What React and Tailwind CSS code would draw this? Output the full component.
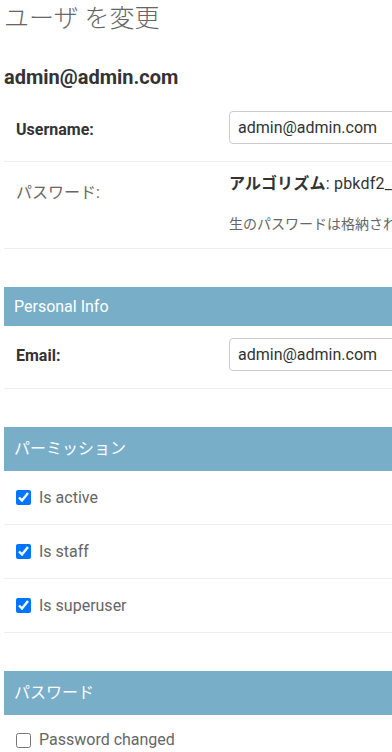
const font = { fontFamily: "Roboto, 'Noto Sans CJK JP', sans-serif" };

function SectionHeader({ children, tall }) {
  return (
    <h2
      className={`bg-[#79aec8] text-white text-[16px] font-normal pl-[10px] flex items-center ${
        tall ? "h-[44px]" : "h-[39px]"
      }`}
    >
      {children}
    </h2>
  );
}

function TextRow({ label, value, height, top, labelTop }) {
  return (
    <div className={`flex border-b border-[#eee] ${height} ${top}`}>
      <label className={`w-[225px] shrink-0 pl-[12px] ${labelTop} text-[16px] leading-[20px] font-bold text-[#333]`}>
        {label}
      </label>
      <input
        readOnly
        value={value}
        className="w-[360px] h-[33px] border border-[#ccc] rounded-[4px] px-[8px] text-[16px] text-[#333] outline-none"
        style={font}
      />
    </div>
  );
}

function CheckRow({ label, checked, last }) {
  return (
    <div className={`flex items-center gap-[8px] pl-[12px] ${last ? "h-[50px]" : "h-[54px] border-b border-[#eee]"}`}>
      <input
        type="checkbox"
        readOnly
        checked={checked}
        className="w-[15px] h-[15px] m-0 accent-[#0075ff]"
      />
      <span className="text-[16px] text-[#666]">{label}</span>
    </div>
  );
}

export default function App() {
  return (
    <div className="w-[392px] h-[752px] overflow-hidden bg-white" style={font}>
      <div className="w-[900px] pl-[4px]">
        <h1 className="text-[25px] font-light text-[#666] leading-[38px]">ユーザ を変更</h1>
        <h2 className="text-[20px] font-bold text-[#333] mt-[27px] leading-[24px]">admin@admin.com</h2>

        {/* main fieldset */}
        <div className="mt-[12px]">
          <TextRow label="Username:" value="admin@admin.com" height="h-[61px]" top="pt-[10px]" labelTop="pt-[9px]" />
          <div className="flex border-b border-[#eee] h-[87px]">
            <label className="w-[225px] shrink-0 pl-[12px] pt-[20px] text-[16px] leading-[22px] text-[#666]">
              パスワード:
            </label>
            <div className="pt-[11px] whitespace-nowrap">
              <div className="text-[16px] leading-[22px] text-[#333] tracking-[0.2px]">
                <strong className="font-bold">アルゴリズム</strong>: pbkdf2_sha256 <strong className="font-bold">ハッシュ</strong>: 150000
              </div>
              <p className="text-[14px] leading-[20px] text-[#666] mt-[19px]">
                生のパスワードは格納されていないため、このユーザのパスワードを確認する方法はありません。
              </p>
            </div>
          </div>
        </div>

        {/* Personal info */}
        <div className="mt-[38px]">
          <SectionHeader>Personal Info</SectionHeader>
          <TextRow label="Email:" value="admin@admin.com" height="h-[63px]" top="pt-[12px]" labelTop="pt-[8px]" />
        </div>

        {/* Permissions */}
        <div className="mt-[38px]">
          <SectionHeader tall>パーミッション</SectionHeader>
          <CheckRow label="Is active" checked />
          <CheckRow label="Is staff" checked />
          <CheckRow label="Is superuser" checked />
        </div>

        {/* Password */}
        <div className="mt-[38px]">
          <SectionHeader tall>パスワード</SectionHeader>
          <CheckRow label="Password changed" checked={false} last />
        </div>
      </div>
    </div>
  );
}
